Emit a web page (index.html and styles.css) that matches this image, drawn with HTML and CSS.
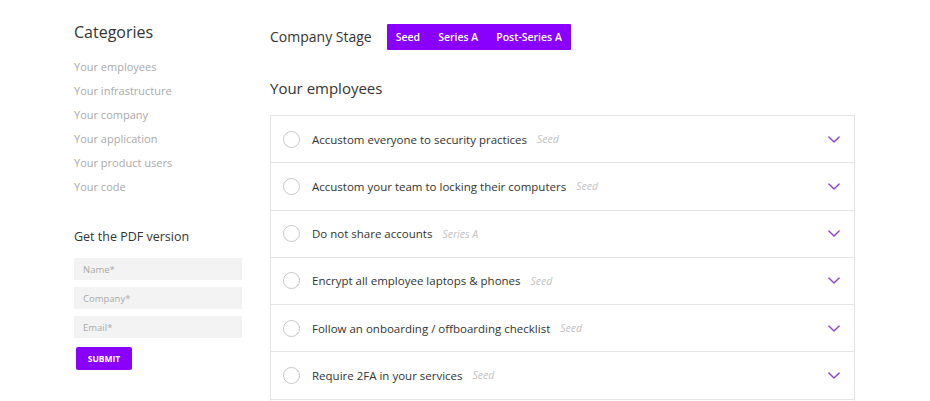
FILE: index.html
```html
<!DOCTYPE html>
<html lang="en">
<head>
    <meta charset="UTF-8">
    <meta name="viewport" content="width=device-width, initial-scale=1.0">
    <title>Security checklist</title>
    <link rel="stylesheet" href="styles.css">
</head>
<body>
    <div class="page">
        <aside class="sidebar">
            <h2 class="side-title">Categories</h2>
            <ul class="cats">
                <li>Your employees</li>
                <li>Your infrastructure</li>
                <li>Your company</li>
                <li>Your application</li>
                <li>Your product users</li>
                <li>Your code</li>
            </ul>

            <h3 class="pdf-title">Get the PDF version</h3>
            <form class="pdf-form">
                <input type="text" placeholder="Name*">
                <input type="text" placeholder="Company*">
                <input type="text" placeholder="Email*">
                <button type="button" class="submit">SUBMIT</button>
            </form>
        </aside>

        <main class="content">
            <div class="stage">
                <span class="stage-label">Company Stage</span>
                <div class="stage-tabs">
                    <span>Seed</span>
                    <span>Series A</span>
                    <span>Post-Series A</span>
                </div>
            </div>

            <h2 class="section-title">Your employees</h2>

            <div class="list">
                <div class="item">
                    <span class="check"></span>
                    <span class="label">Accustom everyone to security practices</span>
                    <span class="tag">Seed</span>
                    <svg class="chev" viewBox="0 0 14 8"><path d="M1 1l6 6 6-6"/></svg>
                </div>
                <div class="item">
                    <span class="check"></span>
                    <span class="label">Accustom your team to locking their computers</span>
                    <span class="tag">Seed</span>
                    <svg class="chev" viewBox="0 0 14 8"><path d="M1 1l6 6 6-6"/></svg>
                </div>
                <div class="item">
                    <span class="check"></span>
                    <span class="label">Do not share accounts</span>
                    <span class="tag">Series A</span>
                    <svg class="chev" viewBox="0 0 14 8"><path d="M1 1l6 6 6-6"/></svg>
                </div>
                <div class="item">
                    <span class="check"></span>
                    <span class="label">Encrypt all employee laptops &amp; phones</span>
                    <span class="tag">Seed</span>
                    <svg class="chev" viewBox="0 0 14 8"><path d="M1 1l6 6 6-6"/></svg>
                </div>
                <div class="item">
                    <span class="check"></span>
                    <span class="label">Follow an onboarding / offboarding checklist</span>
                    <span class="tag">Seed</span>
                    <svg class="chev" viewBox="0 0 14 8"><path d="M1 1l6 6 6-6"/></svg>
                </div>
                <div class="item">
                    <span class="check"></span>
                    <span class="label">Require 2FA in your services</span>
                    <span class="tag">Seed</span>
                    <svg class="chev" viewBox="0 0 14 8"><path d="M1 1l6 6 6-6"/></svg>
                </div>
                <div class="item"></div>
            </div>
        </main>
    </div>
</body>
</html>
```

FILE: styles.css
```css
body {
    margin: 0;
    font-family: "Open Sans", "Liberation Sans", sans-serif;
    color: #333;
    background: #fff;
    overflow: hidden;
    height: 401px;
}

.page {
    display: flex;
    padding: 22px 0 0 74px;
}

/* left column */
.sidebar {
    width: 168px;
    flex-shrink: 0;
}

.side-title {
    margin: 0 0 13px;
    font-size: 16px;
    font-weight: 400;
    line-height: 20px;
    color: #333;
}

.cats {
    list-style: none;
    margin: 0;
    padding: 0;
}

.cats li {
    font-size: 11px;
    line-height: 24px;
    color: #aaa;
}

.pdf-title {
    margin: 29px 0 12px;
    font-size: 12.5px;
    font-weight: 400;
    line-height: 18px;
    color: #333;
}

.pdf-form {
    display: flex;
    flex-direction: column;
    gap: 7px;
}

.pdf-form input {
    height: 22px;
    border: none;
    background: #f3f3f3;
    padding: 0 9px;
    font-family: inherit;
    font-size: 9.5px;
    color: #333;
    outline: none;
}

.pdf-form input::placeholder {
    color: #aaa;
}

.submit {
    align-self: flex-start;
    margin: 2px 0 0 2px;
    width: 56px;
    height: 23px;
    border: none;
    border-radius: 2px;
    background: #8a00ff;
    color: #fff;
    font-family: inherit;
    font-size: 8.5px;
    font-weight: 700;
    padding: 0;
}

/* main column */
.content {
    margin: 2px 0 0 28px;
    width: 585px;
}

.stage {
    display: flex;
    align-items: center;
    gap: 15px;
}

.stage-label {
    font-size: 14px;
    margin-top: -2px;
}

.stage-tabs {
    display: flex;
    background: #8a00ff;
    height: 26px;
    align-items: center;
    padding: 0 9px;
    gap: 18px;
    border-radius: 1px;
}

.stage-tabs span {
    color: #fff;
    font-size: 10.5px;
    font-weight: 600;
}

.section-title {
    margin: 28px 0 17px;
    font-size: 15px;
    font-weight: 400;
    line-height: 20px;
}

.list {
    border: 1px solid #e4e4e4;
    border-bottom: none;
}

.item {
    display: flex;
    align-items: center;
    height: 46.25px;
    padding: 0 13px 0 12px;
    border-bottom: 1px solid #e4e4e4;
}

.check {
    width: 15px;
    height: 15px;
    border: 1.5px solid #c8c8c8;
    border-radius: 50%;
    margin-right: 12px;
}

.label {
    font-size: 11.5px;
    color: #333;
}

.tag {
    margin-left: 10px;
    font-size: 10.5px;
    font-style: italic;
    color: #c4c4c4;
}

.chev {
    margin-left: auto;
    width: 12px;
    height: 7px;
    fill: none;
    stroke: #9040d8;
    stroke-width: 1.6;
    stroke-linecap: round;
    stroke-linejoin: round;
    margin-right: 1px;
}
```
